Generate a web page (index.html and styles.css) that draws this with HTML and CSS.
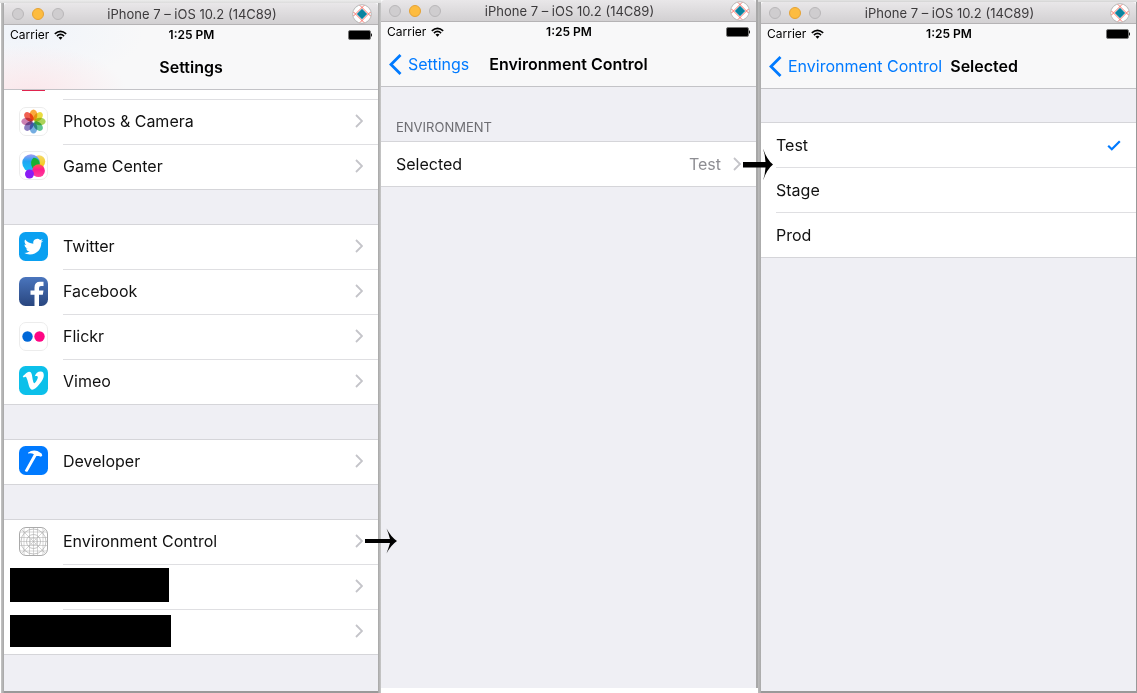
FILE: index.html
```html
<!DOCTYPE html>
<html lang="en">
<head>
<meta charset="utf-8">
<meta name="viewport" content="width=device-width, initial-scale=1">
<title>Environment Control</title>
<link rel="stylesheet" href="styles.css">
</head>
<body>
<svg class="defs" aria-hidden="true">
  <defs>
    <symbol id="home" viewBox="0 0 20 20">
      <circle cx="10" cy="10" r="9.300" fill="#fff" stroke="#aaa" stroke-width=".8"/>
      <path d="M10 4.800 15.200 10 10 15.200 4.800 10Z" fill="#0a84a0"/>
      <path d="M8 1.500 18.500 12M12 1.500 1.500 12M1.500 8 12 18.500M18.500 8 8 18.500" stroke="#f4655c" stroke-width=".9" fill="none"/>
    </symbol>
    <symbol id="wifi" viewBox="0 0 13 10">
      <path d="M.8 3.900Q6.500-1.200 12.200 3.900M2.900 6.100Q6.500 2.800 10.100 6.100" fill="none" stroke="#000" stroke-width="1.600"/>
      <path d="M4.500 7.500Q6.500 6 8.500 7.500L6.500 9.700Z" fill="#000"/>
    </symbol>
    <symbol id="battery" viewBox="0 0 25 10">
      <rect x=".5" y=".5" width="22" height="9" rx="1.500" fill="#000" stroke="#777"/>
      <path d="M23 3Q25 5 23 7Z" fill="#000"/>
    </symbol>
    <symbol id="chevron" viewBox="0 0 8 14">
      <path d="M1 1 7 7 1 13" fill="none" stroke="#c4c4c9" stroke-width="1.800"/>
    </symbol>
    <symbol id="back" viewBox="0 0 13 21">
      <path d="M11.500 1 2 10.500 11.500 20" fill="none" stroke="#007aff" stroke-width="2.800"/>
    </symbol>
  </defs>
</svg>
<main class="stage">
  <div class="frame frame-first">
    <section class="phone">
      <header class="top top-tinted">
        <div class="titlebar">
          <div class="lights"><i class="light"></i><i class="light light-on"></i><i class="light"></i></div>
          <span>iPhone 7 – iOS 10.2 (14C89)</span>
          <svg class="home"><use href="#home"/></svg>
        </div>
        <div class="status">
          <div class="carrier">Carrier <svg class="wifi"><use href="#wifi"/></svg></div>
          <b class="time">1:25 PM</b>
          <svg class="battery"><use href="#battery"/></svg>
        </div>
        <div class="nav"><h1 class="nav-title">Settings</h1></div>
      </header>
      <nav class="groups">
        <ul class="group group-cut">
          <li class="row row-cut"><span class="sliver"></span><span class="row-body"></span></li>
          <li class="row">
            <svg class="icon" viewBox="0 0 29 29"><rect x=".5" y=".5" width="28" height="28" rx="6.500" fill="#fff" stroke="#ececec"/>
              <g class="petals">
                <ellipse cx="14.500" cy="8" rx="3.800" ry="5.600" fill="#f99a1c"/>
                <ellipse cx="14.500" cy="8" rx="3.800" ry="5.600" fill="#e6d51d" transform="rotate(45 14.500 14.500)"/>
                <ellipse cx="14.500" cy="8" rx="3.800" ry="5.600" fill="#9ccc3c" transform="rotate(90 14.500 14.500)"/>
                <ellipse cx="14.500" cy="8" rx="3.800" ry="5.600" fill="#3fb984" transform="rotate(135 14.500 14.500)"/>
                <ellipse cx="14.500" cy="8" rx="3.800" ry="5.600" fill="#5c9fdc" transform="rotate(180 14.500 14.500)"/>
                <ellipse cx="14.500" cy="8" rx="3.800" ry="5.600" fill="#7768b5" transform="rotate(225 14.500 14.500)"/>
                <ellipse cx="14.500" cy="8" rx="3.800" ry="5.600" fill="#c56ba5" transform="rotate(270 14.500 14.500)"/>
                <ellipse cx="14.500" cy="8" rx="3.800" ry="5.600" fill="#ee4433" transform="rotate(315 14.500 14.500)"/>
              </g></svg>
            <a class="row-body" href="#photos">Photos &amp; Camera<svg class="chevron"><use href="#chevron"/></svg></a>
          </li>
          <li class="row">
            <svg class="icon" viewBox="0 0 29 29">
              <defs>
                <linearGradient id="gb" x1="0" y1="0" x2="0" y2="1"><stop offset="0" stop-color="#a39cf2"/><stop offset=".4" stop-color="#1fa4f4"/><stop offset="1" stop-color="#14c5f5"/></linearGradient>
                <linearGradient id="gy" x1="0" y1="0" x2="0" y2="1"><stop offset="0" stop-color="#f3d96a"/><stop offset="1" stop-color="#f5c80c"/></linearGradient>
                <linearGradient id="gp" x1="0" y1="0" x2="0" y2="1"><stop offset="0" stop-color="#ff5a48"/><stop offset=".4" stop-color="#ff1d8e"/><stop offset="1" stop-color="#ff3f9c"/></linearGradient>
              </defs>
              <rect x=".5" y=".5" width="28" height="28" rx="6.500" fill="#fff" stroke="#ececec"/>
              <circle cx="20" cy="10.500" r="6.200" fill="url(#gy)"/>
              <circle cx="12" cy="12" r="8.700" fill="url(#gb)"/>
              <path d="M14.500 6.800A6 6 0 0 1 20 15.500 8 8 0 0 1 13.500 17Q10 11 14.500 6.800Z" fill="#17b032"/>
              <circle cx="19.500" cy="19.700" r="6.400" fill="url(#gp)"/>
              <circle cx="10.500" cy="23" r="4.500" fill="#8a1cf5"/>
            </svg>
            <a class="row-body" href="#game">Game Center<svg class="chevron"><use href="#chevron"/></svg></a>
          </li>
        </ul>
        <ul class="group">
          <li class="row">
            <svg class="icon" viewBox="0 0 29 29"><rect width="29" height="29" rx="6.500" fill="#0aa0f1"/>
              <path transform="translate(4.800 5) scale(.81)" fill="#fff" d="M23.950 4.570a10 10 0 0 1-2.820.77 4.960 4.960 0 0 0 2.160-2.720c-.95.550-2 .95-3.130 1.180a4.920 4.920 0 0 0-8.380 4.480C7.690 8.100 4.070 6.130 1.640 3.160a4.820 4.820 0 0 0-.67 2.480c0 1.710.87 3.210 2.190 4.100a4.900 4.900 0 0 1-2.230-.62v.06a4.920 4.920 0 0 0 3.950 4.830 5 5 0 0 1-2.210.080 4.940 4.940 0 0 0 4.600 3.420A9.870 9.870 0 0 1 0 19.540a14 14 0 0 0 7.550 2.210c9.050 0 14-7.500 14-13.980 0-.21 0-.42-.02-.63a9.940 9.940 0 0 0 2.460-2.550z"/></svg>
            <a class="row-body" href="#twitter">Twitter<svg class="chevron"><use href="#chevron"/></svg></a>
          </li>
          <li class="row">
            <svg class="icon" viewBox="0 0 29 29"><defs><linearGradient id="fb" x1="0" y1="0" x2="0" y2="1"><stop offset="0" stop-color="#4a75bd"/><stop offset="1" stop-color="#29467f"/></linearGradient></defs>
              <rect width="29" height="29" rx="6.500" fill="url(#fb)"/>
              <path d="M15.500 29V17.800H11.500V13.500H15.500V10.500Q15.500 4.800 21 4.800H24.500V9H22Q20 9 20 11V13.500H24.500L23.800 17.800H20V29Z" fill="#fff"/></svg>
            <a class="row-body" href="#facebook">Facebook<svg class="chevron"><use href="#chevron"/></svg></a>
          </li>
          <li class="row">
            <svg class="icon" viewBox="0 0 29 29"><rect x=".5" y=".5" width="28" height="28" rx="6.500" fill="#fff" stroke="#ececec"/><circle cx="8.500" cy="14.500" r="5.200" fill="#0068d8"/><circle cx="20.500" cy="14.500" r="5.200" fill="#ff0684"/></svg>
            <a class="row-body" href="#flickr">Flickr<svg class="chevron"><use href="#chevron"/></svg></a>
          </li>
          <li class="row">
            <svg class="icon" viewBox="0 0 29 29"><rect width="29" height="29" rx="6.500" fill="#0cc0ea"/>
              <path transform="translate(3.700 4) scale(.88)" fill="#fff" d="M23.980 6.420c-.110 2.340-1.740 5.540-4.900 9.610C15.820 20.270 13.060 22.400 10.800 22.400c-1.400 0-2.580-1.300-3.550-3.880L5.320 11.400C4.600 8.820 3.830 7.530 3 7.530c-.180 0-.80.380-1.880 1.130L0 7.200c1.180-1.040 2.340-2.080 3.500-3.130C5.080 2.700 6.260 2 7.050 1.920c1.870-.180 3.020 1.100 3.450 3.830.47 2.950.79 4.790.97 5.510.54 2.450 1.130 3.670 1.780 3.670.5 0 1.260-.8 2.270-2.390 1-1.590 1.540-2.800 1.620-3.630.140-1.370-.4-2.060-1.620-2.060-.58 0-1.170.130-1.780.390C14.920 3.370 17.180 1.500 20.520 1.610c2.470.070 3.640 1.670 3.460 4.810z"/></svg>
            <a class="row-body" href="#vimeo">Vimeo<svg class="chevron"><use href="#chevron"/></svg></a>
          </li>
        </ul>
        <ul class="group">
          <li class="row">
            <svg class="icon" viewBox="0 0 29 29"><rect width="29" height="29" rx="6.500" fill="#007aff"/>
              <path d="M9 6.800Q13 3.600 18.500 5L22.600 7.600 23.300 9.500 22 10.800 19.800 10 17.400 9.900 8.600 25.500Q7 26.300 5.800 24.800L14.900 8.300Q12.500 6.600 9 7.400Z" fill="#fff"/></svg>
            <a class="row-body" href="#developer">Developer<svg class="chevron"><use href="#chevron"/></svg></a>
          </li>
        </ul>
        <ul class="group">
          <li class="row">
            <svg class="icon" viewBox="0 0 29 29" fill="none" stroke="#aaa" stroke-width=".7"><rect x=".5" y=".5" width="28" height="28" rx="6.500" fill="#fff" stroke-width="1"/>
              <path d="M5 1V28M10.500 1V28M14.500 1V28M18.500 1V28M24 1V28M1 5H28M1 10.500H28M1 14.500H28M1 18.500H28M1 24H28M2 2 27 27M27 2 2 27" stroke-width=".5"/><circle cx="14.500" cy="14.500" r="12.500"/><circle cx="14.500" cy="14.500" r="7"/><circle cx="14.500" cy="14.500" r="3.500" stroke-width=".5"/></svg>
            <a class="row-body" href="#environment">Environment Control<svg class="chevron"><use href="#chevron"/></svg></a>
            <svg class="arrow" viewBox="0 0 32 26"><path d="M0 11H25Q23.500 5 21.500 0.500 26 9 32 13 26 17 21.500 25.500 23.500 20 25 15H0Z"/></svg>
          </li>
          <li class="row row-hidden">
            <a class="row-body" href="#hidden-1" aria-label="Hidden item 1"><svg class="chevron"><use href="#chevron"/></svg></a>
            <span class="bar"></span>
          </li>
          <li class="row row-hidden">
            <a class="row-body" href="#hidden-2" aria-label="Hidden item 2"><svg class="chevron"><use href="#chevron"/></svg></a>
            <span class="bar bar-wide"></span>
          </li>
        </ul>
      </nav>
    </section>
  </div>

  <div class="frame frame-second">
    <section class="phone">
      <header class="top">
        <div class="titlebar">
          <div class="lights"><i class="light"></i><i class="light light-on"></i><i class="light"></i></div>
          <span>iPhone 7 – iOS 10.2 (14C89)</span>
          <svg class="home"><use href="#home"/></svg>
        </div>
        <div class="status">
          <div class="carrier">Carrier <svg class="wifi"><use href="#wifi"/></svg></div>
          <b class="time">1:25 PM</b>
          <svg class="battery"><use href="#battery"/></svg>
        </div>
        <div class="nav">
          <button class="back" type="button"><svg class="back-icon"><use href="#back"/></svg>Settings</button>
          <h1 class="nav-title">Environment Control</h1>
        </div>
      </header>
      <h2 class="caption">ENVIRONMENT</h2>
      <ul class="group">
        <li class="row row-plain">
          <a class="row-body" href="#selected">Selected<span class="value">Test</span><svg class="chevron"><use href="#chevron"/></svg></a>
          <svg class="arrow arrow-bold" viewBox="0 0 30 33"><path d="M0 14H22.500Q22 6 20 0.500 24 12 30 16.500 24 21 20 32.500 22 27 22.500 19.500H0Z"/></svg>
        </li>
      </ul>
    </section>
  </div>

  <div class="frame frame-third">
    <section class="phone">
      <header class="top">
        <div class="titlebar">
          <div class="lights"><i class="light"></i><i class="light light-on"></i><i class="light"></i></div>
          <span>iPhone 7 – iOS 10.2 (14C89)</span>
          <svg class="home"><use href="#home"/></svg>
        </div>
        <div class="status">
          <div class="carrier">Carrier <svg class="wifi"><use href="#wifi"/></svg></div>
          <b class="time">1:25 PM</b>
          <svg class="battery"><use href="#battery"/></svg>
        </div>
        <div class="nav">
          <button class="back" type="button"><svg class="back-icon"><use href="#back"/></svg>Environment Control</button>
          <h1 class="nav-title">Selected</h1>
        </div>
      </header>
      <div class="groups groups-options">
        <div class="group">
          <div class="row row-plain"><label class="row-body" for="test">Test<input class="option" type="radio" name="env" id="test" checked><svg class="check" viewBox="0 0 14 11"><path d="M1.200 5.800 4.800 9.200 12.800 1.200" fill="none" stroke="#007aff" stroke-width="2.200"/></svg></label></div>
          <div class="row row-plain"><label class="row-body" for="stage">Stage<input class="option" type="radio" name="env" id="stage"></label></div>
          <div class="row row-plain"><label class="row-body" for="prod">Prod<input class="option" type="radio" name="env" id="prod"></label></div>
        </div>
      </div>
    </section>
  </div>
</main>
</body>
</html>
```
FILE: styles.css
```css
* { box-sizing: border-box; }

body {
  margin: 0;
  background: #fff;
  color: #111;
  font: 16px/20px Inter, "Liberation Sans", sans-serif;
}

.defs { position: absolute; width: 0; height: 0; }
svg { flex: none; display: block; }
ul { list-style: none; margin: 0; padding: 0; }
h1, h2 { margin: 0; }

.stage {
  display: grid;
  grid-template-columns: 381fr 377fr 379fr;
  min-height: 100vh;
}

.frame { display: flex; }
.frame-first {
  padding: 3px 3px 2px 4px;
  background:
    linear-gradient(#ececec, #dcdcdc) top / 100% 3px no-repeat,
    linear-gradient(90deg, #fff 1px, #c4c4c4 1px, #a6a6a6 4px, #999 4px, #999 calc(100% - 3px), #a6a6a6 calc(100% - 3px), #c8c8c8);
}
.frame-second {
  padding: 0 2px 0 0;
  margin-bottom: 5px;
  background: #a8a8a8;
}
.frame-third {
  padding: 2px 1px 2px 3px;
  background:
    linear-gradient(#e4e4e4, #d4d4d4) top / 100% 2px no-repeat,
    linear-gradient(90deg, #bbb, #aaa 3px, #999 3px);
}

.phone { flex: 1; min-width: 0; background: #efeff4; }
.frame-first .phone, .frame-third .phone { border-radius: 4px 4px 0 0; }

.top { background: #f8f8f9; border-bottom: 1px solid #c3c3c7; }
.top-tinted {
  background:
    radial-gradient(ellipse 100px 50px at 24px 92px, #fbe6ea, transparent),
    radial-gradient(ellipse 120px 50px at 20px 30px, #f0f4fa, transparent),
    #f8f8f9;
}

.titlebar {
  display: grid;
  grid-template-columns: 1fr auto 1fr;
  align-items: center;
  height: 22px;
  padding: 0 6px 0 8px;
  background: linear-gradient(#e9e7e9, #d2d0d2);
  border-bottom: 1px solid #b5b3b5;
  border-radius: 4px 4px 0 0;
  color: #3c3a3c;
  font-size: 13px;
}
.lights { display: flex; gap: 8px; }
.light {
  width: 12px;
  height: 12px;
  border: 1px solid #b9b7b9;
  border-radius: 50%;
  background: #cfcdcf;
}
.light-on { background: #fdbc40; border-color: #e5a235; }
.home { width: 20px; height: 20px; justify-self: end; }

.status {
  display: grid;
  grid-template-columns: 1fr auto 1fr;
  align-items: center;
  height: 20px;
  padding: 0 5px 0 6px;
  color: #000;
  font-size: 12px;
}
.carrier { display: flex; align-items: center; gap: 5px; }
.wifi { width: 13px; height: 10px; }
.time { font-size: 12px; font-weight: 600; }
.battery { width: 25px; height: 10px; justify-self: end; }

.nav {
  display: grid;
  grid-template-columns: 1fr auto 1fr;
  align-items: center;
  column-gap: 8px;
  height: 44px;
  padding: 0 8px;
}
.nav-title {
  grid-column: 2;
  color: #000;
  font-size: 16px;
  font-weight: 600;
  white-space: nowrap;
}
.back {
  display: flex;
  align-items: center;
  gap: 6px;
  padding: 0;
  border: 0;
  background: none;
  color: #007aff;
  font: inherit;
  white-space: nowrap;
}
.back-icon { width: 13px; height: 21px; }

.groups { display: flex; flex-direction: column; gap: 34px; }
.groups-options { padding-top: 33px; }
.group {
  background: #fff;
  border: solid #d5d5d9;
  border-width: 1px 0;
}
.group-cut { border-top: 0; }

.row {
  position: relative;
  display: flex;
  align-items: center;
  gap: 15px;
  height: 45px;
  padding-left: 15px;
}
.row:last-child { height: 44px; }
.row-body {
  display: flex;
  flex: 1;
  align-items: center;
  align-self: stretch;
  padding: 0 15px 2px 0;
  border-bottom: 1px solid #dfdfe2;
  color: inherit;
  text-decoration: none;
}
.row:last-child .row-body { border-bottom: 0; }
.row-plain .row-body { padding-bottom: 0; }
.row-cut { height: 10px; gap: 18px; padding-left: 18px; }
.row-hidden { padding-left: 59px; }
.icon { width: 29px; height: 29px; margin-bottom: 3px; }
.sliver {
  align-self: flex-start;
  width: 23px;
  height: 1px;
  background: #e0244e;
}
.petals ellipse { mix-blend-mode: multiply; opacity: .85; }
.chevron { width: 8px; height: 14px; margin-left: auto; }
.value { margin-left: auto; color: #8e8e93; }
.value + .chevron { margin-left: 12px; }

.bar {
  position: absolute;
  top: 3px;
  left: 6px;
  width: 159px;
  height: 34px;
  background: #000;
}
.bar-wide { top: 5px; width: 161px; height: 32px; }

.arrow {
  position: absolute;
  z-index: 1;
  top: 8px;
  right: -19px;
  width: 32px;
  height: 26px;
}
.arrow-bold { top: 6px; right: -17px; width: 30px; height: 33px; }

.caption {
  padding: 30px 15px 4px;
  color: #6d6d72;
  font-size: 13px;
  font-weight: 400;
}

.option { appearance: none; width: 0; height: 0; margin: 0 0 0 auto; }
.check { width: 14px; height: 11px; }
```
